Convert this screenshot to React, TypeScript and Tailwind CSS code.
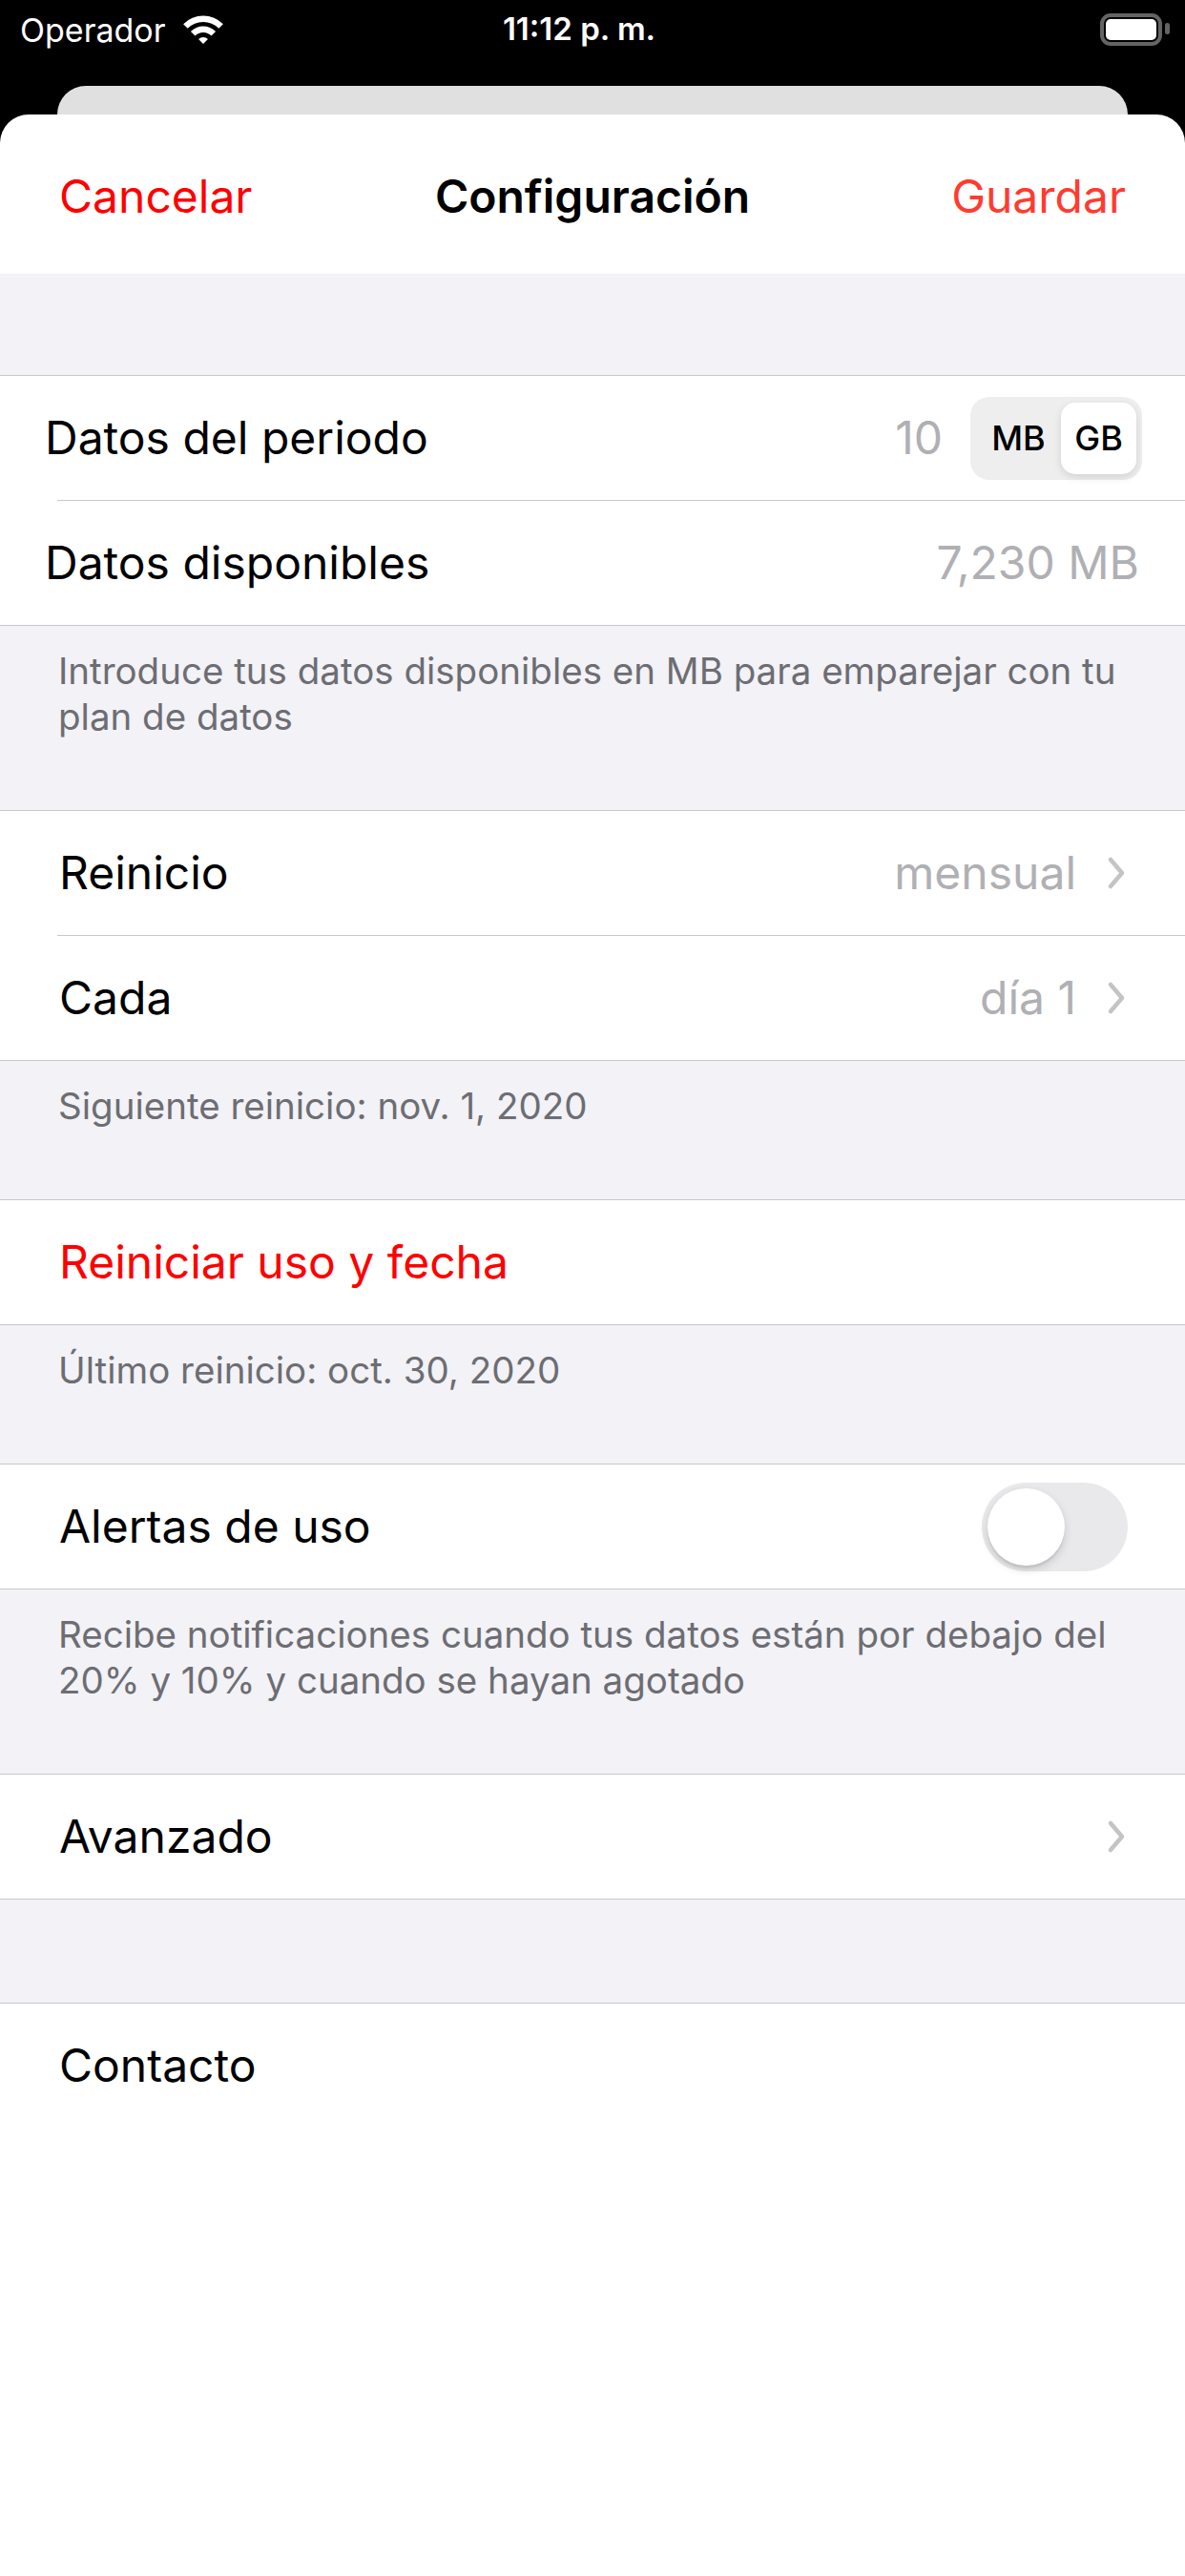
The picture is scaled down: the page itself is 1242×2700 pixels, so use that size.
import React from "react";

const Wifi = () => (
    <svg width="42" height="32" viewBox="0 0 42 32" fill="white">
        <path d="M0.14 10.14 A29.5 29.5 0 0 1 41.86 10.14 L37.26 14.74 A23 23 0 0 0 4.74 14.74 Z" />
        <path d="M7.92 17.92 A18.5 18.5 0 0 1 34.08 17.92 L29.49 22.51 A12 12 0 0 0 12.51 22.51 Z" />
        <path d="M16.05 26.05 A7 7 0 0 1 25.95 26.05 L21 31 Z" />
    </svg>
);

const Battery = () => (
    <svg width="73" height="34" viewBox="0 0 73 34" fill="none">
        <rect x="2" y="2" width="61" height="30" rx="9" stroke="#646464" strokeWidth="4" />
        <rect x="6" y="6" width="53" height="22" rx="5" fill="white" />
        <rect x="68" y="10" width="5" height="12" rx="2.5" fill="#646464" />
    </svg>
);

const Chevron = () => (
    <svg width="20" height="36" viewBox="0 0 20 36" fill="none">
        <path d="M4 4 L16 18 L4 32" stroke="#c4c4c7" strokeWidth="4.5" strokeLinecap="round" strokeLinejoin="round" />
    </svg>
);

const Separator = () => <div className="h-px ml-[60px] bg-[#c8c7cc]" />;

const Footer = ({ children }: { children: React.ReactNode }) => (
    <div className="px-[61px] pt-[23px] pb-[74px] text-[38.5px] leading-[48px] text-[#6d6d72]">
        {children}
    </div>
);

const Section = ({ children }: { children: React.ReactNode }) => (
    <div className="bg-white border-y border-[#c8c7cc]">{children}</div>
);

const NavRow = ({ label, value }: { label: string; value?: string }) => (
    <div className="h-[130px] flex items-center justify-between pl-[62px] pr-[62px]">
        <span>{label}</span>
        <div className="flex items-center gap-[32px]">
            {value && <span className="text-[#b0b0b4]">{value}</span>}
            <Chevron />
        </div>
    </div>
);

export default function App() {
    return (
        <div className="min-h-[2700px] bg-black font-['Inter',sans-serif] text-black">
            {/* status bar */}
            <div className="h-[62px] grid grid-cols-[1fr_auto_1fr] items-center px-[16px] text-white text-[34px]">
                <div className="flex items-center gap-[18px] pl-[5px]">
                    <span>Operador</span>
                    <Wifi />
                </div>
                <span className="font-semibold text-[33px] -translate-x-[14px]">11:12 p. m.</span>
                <div className="justify-self-end">
                    <Battery />
                </div>
            </div>

            <div className="mt-[28px] mx-[60px] h-[30px] rounded-t-[30px] bg-[#e0e0e0]" />

            <div className="bg-white rounded-t-[30px] min-h-[2580px] text-[48px]">
                {/* header */}
                <div className="h-[167px] pt-[4px] px-[62px] grid grid-cols-[1fr_auto_1fr] items-center">
                    <span className="text-[#ff0000]">Cancelar</span>
                    <span className="font-semibold">Configuración</span>
                    <span className="justify-self-end text-[#ff3b30]">Guardar</span>
                </div>

                <div className="bg-[#f2f2f7]">
                    <div className="h-[106px]" />

                    <Section>
                        <div className="h-[130px] flex items-center justify-between pl-[47px] pr-[45px]">
                            <span>Datos del periodo</span>
                            <div className="flex items-center gap-[29px]">
                                <span className="text-[#b0b0b4]">10</span>
                                <div className="w-[180px] h-[87px] rounded-[20px] bg-[#eeeeef] flex items-center p-[6px] text-[36px] font-medium">
                                    <div className="flex-1 text-center">MB</div>
                                    <div className="w-[79px] h-[75px] rounded-[15px] bg-white shadow-[0_3px_8px_rgba(0,0,0,0.12)] flex items-center justify-center">
                                        GB
                                    </div>
                                </div>
                            </div>
                        </div>
                        <Separator />
                        <div className="h-[130px] flex items-center justify-between pl-[47px] pr-[48px]">
                            <span>Datos disponibles</span>
                            <span className="text-[#b0b0b4]">7,230 MB</span>
                        </div>
                    </Section>
                    <Footer>
                        Introduce tus datos disponibles en MB para emparejar con tu
                        <br />
                        plan de datos
                    </Footer>

                    <Section>
                        <NavRow label="Reinicio" value="mensual" />
                        <Separator />
                        <NavRow label="Cada" value="día 1" />
                    </Section>
                    <Footer>Siguiente reinicio: nov. 1, 2020</Footer>

                    <Section>
                        <div className="h-[130px] flex items-center pl-[62px] text-[#ff0000]">
                            Reiniciar uso y fecha
                        </div>
                    </Section>
                    <Footer>Último reinicio: oct. 30, 2020</Footer>

                    <Section>
                        <div className="h-[130px] flex items-center justify-between pl-[62px] pr-[60px]">
                            <span>Alertas de uso</span>
                            <div className="w-[153px] h-[93px] rounded-full bg-[#e9e9eb] p-[6px] flex items-center">
                                <div className="w-[81px] h-[81px] rounded-full bg-white shadow-[0_4px_10px_rgba(0,0,0,0.15),0_3px_1px_rgba(0,0,0,0.06)]" />
                            </div>
                        </div>
                    </Section>
                    <Footer>
                        Recibe notificaciones cuando tus datos están por debajo del
                        <br />
                        20% y 10% y cuando se hayan agotado
                    </Footer>

                    <Section>
                        <NavRow label="Avanzado" />
                    </Section>

                    <div className="h-[108px]" />
                </div>

                <div className="border-t border-[#c8c7cc]">
                    <div className="h-[130px] flex items-center pl-[62px]">Contacto</div>
                </div>
            </div>
        </div>
    );
}
